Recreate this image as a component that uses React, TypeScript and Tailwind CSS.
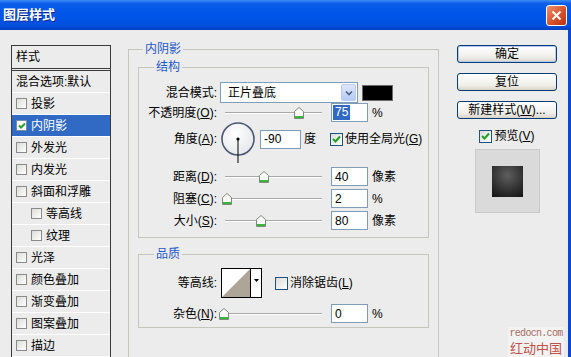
import React from 'react'

const styleItems = [
  { label: '投影' },
  { label: '内阴影', checked: true, active: true },
  { label: '外发光' },
  { label: '内发光' },
  { label: '斜面和浮雕' },
  { label: '等高线', indent: true },
  { label: '纹理', indent: true },
  { label: '光泽' },
  { label: '颜色叠加' },
  { label: '渐变叠加' },
  { label: '图案叠加' },
  { label: '描边' },
]

function ListCheck({ checked }: { checked?: boolean }) {
  return (
    <span
      className={`flex w-[11px] h-[11px] shrink-0 items-center justify-center border ${
        checked ? 'border-[#7A8AA8] bg-white' : 'border-[#8A8A8A] bg-[linear-gradient(135deg,#DCDCD8,#FFFFFF)]'
      }`}
    >
      {checked && (
        <svg width="8" height="8" viewBox="0 0 8 8">
          <path d="M1 3.5 L3 5.5 L7 1.5" fill="none" stroke="#2BA12B" strokeWidth="2" />
        </svg>
      )}
    </span>
  )
}

function XPCheck({ checked }: { checked?: boolean }) {
  return (
    <span className="flex w-[13px] h-[13px] shrink-0 items-center justify-center border border-[#1C5180] bg-[linear-gradient(135deg,#DCDCD7,#FFFFFF)]">
      {checked && (
        <svg width="9" height="9" viewBox="0 0 9 9">
          <path d="M1 4 L3.5 6.5 L8 1.5" fill="none" stroke="#21A121" strokeWidth="2" />
        </svg>
      )}
    </span>
  )
}

function Slider({ value }: { value: number }) {
  return (
    <div className="relative w-[104px] h-full shrink-0">
      <div className="absolute left-[5px] right-[2px] top-1/2 -mt-px h-[2px] border-t border-[#A8A8A8] border-b border-b-white" />
      <svg
        className="absolute top-1/2 -mt-[6px]"
        style={{ left: value * 100 - 1 }}
        width="10"
        height="12"
        viewBox="0 0 10 12"
      >
        <path d="M0.5 11.5 V4.5 L5 0.5 L9.5 4.5 V11.5 Z" fill="#FAFAFA" stroke="#7C8A7C" />
        <path d="M1 10 H9" stroke="#3DB53D" strokeWidth="2" />
      </svg>
    </div>
  )
}

function NumBox({ value, selected }: { value: string; selected?: boolean }) {
  return (
    <div className="w-[37px] h-[19px] shrink-0 border border-[#7F9DB9] bg-white flex items-center pl-px">
      <span className={selected ? 'bg-[#316AC5] text-white px-[2px] leading-[15px]' : 'px-[2px]'}>{value}</span>
    </div>
  )
}

function Row({ label, className, children }: { label: React.ReactNode; className: string; children: React.ReactNode }) {
  return (
    <div className={`flex items-center ${className}`}>
      <span className="w-[78px] shrink-0 text-right whitespace-nowrap">{label}</span>
      <div className="ml-[3px] flex items-center h-full">{children}</div>
    </div>
  )
}

function XPButton({ children, primary }: { children: React.ReactNode; primary?: boolean }) {
  return (
    <div
      className={`h-[18px] w-full flex items-center justify-center rounded-[3px] border border-[#003C74] bg-[linear-gradient(to_bottom,#FFFFFF,#F0EFEA_70%,#D8D2C6)] ${
        primary ? 'shadow-[inset_0_0_0_1px_#B4CAEE]' : ''
      }`}
    >
      {children}
    </div>
  )
}

export default function App() {
  return (
    <div className="relative w-[571px] h-[357px] overflow-hidden flex flex-col bg-[#ECECEC] text-[12px] text-black font-['Liberation_Sans','Noto_Sans_CJK_SC',sans-serif]">
      {/* title bar */}
      <div className="h-[30px] shrink-0 flex items-center justify-between pl-[3px] pr-[4px] bg-[linear-gradient(to_bottom,#3D8DF5_0%,#0A5DE8_12%,#0055EA_45%,#0050DF_85%,#0040BE_100%)]">
        <span className="text-white font-bold text-[13px] [text-shadow:1px_1px_0_#0A2A8C]">图层样式</span>
        <div className="w-[21px] h-[21px] rounded-[3px] border border-white flex items-center justify-center bg-[linear-gradient(135deg,#EE9270,#D8522A_55%,#B8330F)]">
          <svg width="11" height="11" viewBox="0 0 11 11">
            <path d="M1.5 1.5 L9.5 9.5 M9.5 1.5 L1.5 9.5" stroke="#FFFFFF" strokeWidth="2" />
          </svg>
        </div>
      </div>

      <div className="flex flex-1 min-h-0 border-r-[3px] border-[#0B47D6]">
        {/* styles list */}
        <div className="ml-[11px] mt-[15px] w-[100px] shrink-0 border-l border-r border-t border-[#3A3A3A] flex flex-col">
          <div className="h-[25px] pl-[4px] flex items-center border-b-[3px] border-double border-[#3A3A3A]">样式</div>
          <div className="h-[22px] pl-[4px] flex items-center border-b border-[#FFFFFF] whitespace-nowrap">混合选项:默认</div>
          {styleItems.map((s) => (
            <div
              key={s.label}
              className={`h-[22px] flex items-center gap-[4px] border-b border-white ${s.indent ? 'pl-[19px]' : 'pl-[4px]'} ${
                s.active ? 'bg-[#316AC5] text-white' : ''
              }`}
            >
              <ListCheck checked={s.checked} />
              <span>{s.label}</span>
            </div>
          ))}
        </div>

        {/* settings */}
        <div className="ml-[17px] mt-[11px] w-[311px] shrink-0">
          <fieldset className="h-[330px] border border-[#C5C5BE] px-[9px]">
            <legend className="ml-[5px] px-[2px] leading-[16px] text-[#1F58C9]">内阴影</legend>

            <fieldset className="mt-[2px] border border-[#C5C5BE] pb-[7px]">
              <legend className="ml-[15px] px-[2px] leading-[16px] text-[#1F58C9]">结构</legend>

              <Row label="混合模式:" className="mt-[7px] h-[21px]">
                <div className="w-[138px] h-[21px] border border-[#7F9DB9] bg-white flex items-center justify-between pl-[7px] pr-px">
                  <span>正片叠底</span>
                  <div className="w-[15px] h-[17px] rounded-[2px] border border-[#B9CBF3] bg-[linear-gradient(to_bottom,#DCE6FC,#B6CAF6)] flex items-center justify-center">
                    <svg width="8" height="6" viewBox="0 0 8 6">
                      <path d="M1 1.5 L4 4.5 L7 1.5" fill="none" stroke="#4D6185" strokeWidth="1.6" />
                    </svg>
                  </div>
                </div>
                <div className="ml-[4px] w-[31px] h-[16px] bg-black border border-[#6A6A6A]" />
              </Row>

              <Row
                label={
                  <>
                    不透明度(<span className="underline">O</span>):
                  </>
                }
                className="h-[19px]"
              >
                <Slider value={0.75} />
                <div className="ml-[7px]">
                  <NumBox value="75" selected />
                </div>
                <span className="ml-[4px]">%</span>
              </Row>

              <Row
                label={
                  <>
                    角度(<span className="underline">A</span>):
                  </>
                }
                className="h-[34px]"
              >
                <svg className="ml-px overflow-visible" width="34" height="34" viewBox="0 0 34 34">
                  <defs>
                    <radialGradient id="dialFill" cx="40%" cy="35%" r="70%">
                      <stop offset="0%" stopColor="#FFFFFF" />
                      <stop offset="100%" stopColor="#E4E6EA" />
                    </radialGradient>
                  </defs>
                  <circle cx="17" cy="17" r="16" fill="url(#dialFill)" stroke="#4A5874" strokeWidth="1.6" />
                  <circle cx="17" cy="17" r="1.6" fill="#000" />
                  <path d="M17 17 V41" stroke="#000" strokeWidth="1" />
                </svg>
                <div className="ml-[5px] w-[41px] h-[19px] border border-[#7F9DB9] bg-white flex items-center pl-[3px]">-90</div>
                <span className="ml-[3px]">度</span>
                <div className="ml-[14px]">
                  <XPCheck checked />
                </div>
                <span className="ml-[2px] whitespace-nowrap">
                  使用全局光(<span className="underline">G</span>)
                </span>
              </Row>

              <Row
                label={
                  <>
                    距离(<span className="underline">D</span>):
                  </>
                }
                className="mt-[11px] h-[19px]"
              >
                <Slider value={0.4} />
                <div className="ml-[7px]">
                  <NumBox value="40" />
                </div>
                <span className="ml-[4px]">像素</span>
              </Row>

              <Row
                label={
                  <>
                    阻塞(<span className="underline">C</span>):
                  </>
                }
                className="mt-[3px] h-[19px]"
              >
                <Slider value={0.03} />
                <div className="ml-[7px]">
                  <NumBox value="2" />
                </div>
                <span className="ml-[4px]">%</span>
              </Row>

              <Row
                label={
                  <>
                    大小(<span className="underline">S</span>):
                  </>
                }
                className="mt-[3px] h-[19px]"
              >
                <Slider value={0.37} />
                <div className="ml-[7px]">
                  <NumBox value="80" />
                </div>
                <span className="ml-[4px]">像素</span>
              </Row>
            </fieldset>

            <fieldset className="mt-[8px] border border-[#C5C5BE] pb-[4px]">
              <legend className="ml-[15px] px-[2px] leading-[16px] text-[#1F58C9]">品质</legend>

              <Row label="等高线:" className="mt-[6px] h-[30px]">
                <div className="ml-px w-[41px] h-[30px] border border-black flex bg-white">
                  <svg width="28" height="28" viewBox="0 0 28 28">
                    <polygon points="0,28 28,0 28,28" fill="#ACA598" />
                  </svg>
                  <div className="flex-1 border-l border-black flex justify-center pt-[10px]">
                    <svg width="5" height="3" viewBox="0 0 5 3">
                      <polygon points="0,0 5,0 2.5,3" fill="#000" />
                    </svg>
                  </div>
                </div>
                <div className="ml-[13px]">
                  <XPCheck />
                </div>
                <span className="ml-[2px] whitespace-nowrap">
                  消除锯齿(<span className="underline">L</span>)
                </span>
              </Row>

              <Row
                label={
                  <>
                    杂色(<span className="underline">N</span>):
                  </>
                }
                className="mt-[6px] h-[19px]"
              >
                <Slider value={0} />
                <div className="ml-[7px]">
                  <NumBox value="0" />
                </div>
                <span className="ml-[4px]">%</span>
              </Row>
            </fieldset>
          </fieldset>
        </div>

        {/* buttons */}
        <div className="ml-[18px] mt-[15px] w-[100px] shrink-0 flex flex-col">
          <XPButton primary>确定</XPButton>
          <div className="mt-[10px]">
            <XPButton>复位</XPButton>
          </div>
          <div className="mt-[10px]">
            <XPButton>
              新建样式(<span className="underline">W</span>)...
            </XPButton>
          </div>
          <div className="mt-[10px] h-[14px] flex items-center justify-center gap-[2px]">
            <XPCheck checked />
            <span>
              预览(<span className="underline">V</span>)
            </span>
          </div>
          <div className="mt-[6px] mx-auto w-[65px] h-[64px] border border-[#C9C9C9] bg-[#DADADA] flex items-center justify-center">
            <div className="w-[31px] h-[31px] bg-[radial-gradient(circle_at_50%_30%,#5E5E5E,#2C2C2C_65%,#141414)]" />
          </div>
        </div>
      </div>

      {/* watermark */}
      <div className="absolute right-[7px] bottom-0 w-[56px] h-[30px] bg-[#F3F3F3] flex flex-col items-center pt-px gap-px">
        <span className="text-[10px] leading-[11px] tracking-[-0.7px] text-[#A86A66] font-['Liberation_Mono',monospace]">redocn.com</span>
        <span className="text-[13px] leading-[16px] text-[#C0504A] font-['Noto_Sans_CJK_SC',sans-serif]">红动中国</span>
      </div>
    </div>
  )
}
